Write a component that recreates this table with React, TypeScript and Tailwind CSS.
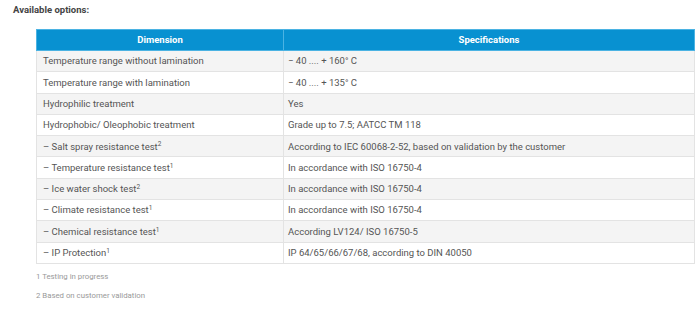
const rows: [React.ReactNode, string][] = [
  ['Temperature range without lamination', '− 40 .... + 160° C'],
  ['Temperature range with lamination', '− 40 .... + 135° C'],
  ['Hydrophilic treatment', 'Yes'],
  ['Hydrophobic/ Oleophobic treatment', 'Grade up to 7.5; AATCC TM 118'],
  [<>– Salt spray resistance test<sup className="text-[6.5px]">2</sup></>, 'According to IEC 60068-2-52, based on validation by the customer'],
  [<>– Temperature resistance test<sup className="text-[6.5px]">1</sup></>, 'In accordance with ISO 16750-4'],
  [<>– Ice water shock test<sup className="text-[6.5px]">2</sup></>, 'In accordance with ISO 16750-4'],
  [<>– Climate resistance test<sup className="text-[6.5px]">1</sup></>, 'In accordance with ISO 16750-4'],
  [<>– Chemical resistance test<sup className="text-[6.5px]">1</sup></>, 'According LV124/ ISO 16750-5'],
  [<>– IP Protection<sup className="text-[6.5px]">1</sup></>, 'IP 64/65/66/67/68, according to DIN 40050'],
]

export default function App() {
  return (
    <div className="w-[700px] h-[317px] bg-white pt-[3px] font-['Roboto',sans-serif]">
      <h3 className="pl-[13px] text-[9.5px] font-bold text-[#444] leading-[14px]">Available options:</h3>
      <div className="ml-[36px] mt-[12px] w-[659px]">
        <table className="w-full border-collapse text-[9.5px] text-[#555]">
          <thead>
            <tr className="bg-[#0891d1] text-white font-bold h-[21px]">
              <th className="w-[247px] border border-[#4bb3e3] font-bold">Dimension</th>
              <th className="border border-[#4bb3e3] font-bold">Specifications</th>
            </tr>
          </thead>
          <tbody>
            {rows.map(([a, b], i) => (
              <tr key={i} className={`h-[21.3px] ${i % 2 === 0 ? 'bg-[#f4f4f4]' : 'bg-white'}`}>
                <td className="border border-[#e3e3e3] pl-[6px] leading-none">{a}</td>
                <td className="border border-[#e3e3e3] pl-[4px] leading-none">{b}</td>
              </tr>
            ))}
          </tbody>
        </table>
        <p className="mt-[8px] text-[7.8px] text-[#999] leading-[10px]">1 Testing in progress</p>
        <p className="mt-[9px] text-[7.8px] text-[#999] leading-[10px]">2 Based on customer validation</p>
      </div>
    </div>
  )
}
